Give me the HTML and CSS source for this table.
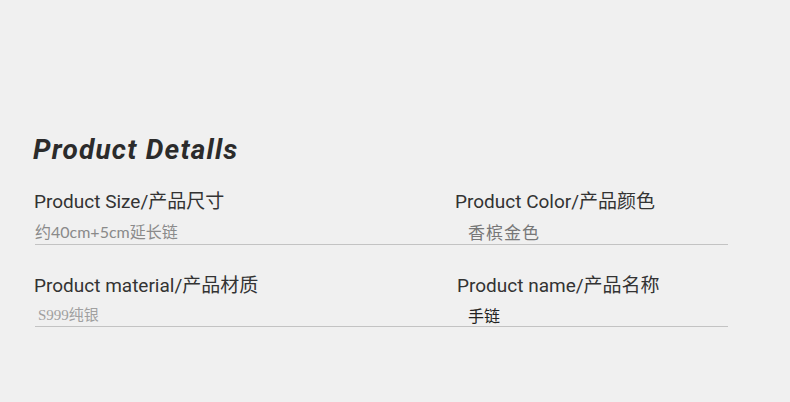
FILE: index.html
```html
<!DOCTYPE html>
<html lang="zh">
<head>
<meta charset="utf-8">
<title>Product Details</title>
<link rel="stylesheet" href="styles.css">
</head>
<body>
<main class="page">
  <h1 class="title">Product Detalls</h1>
  <section class="specs">
    <div class="row row-first">
      <div class="cell">
        <div class="label">Product Size/产品尺寸</div>
        <div class="value value-size">约40cm+5cm延长链</div>
      </div>
      <div class="cell cell-right">
        <div class="label">Product Color/产品颜色</div>
        <div class="value value-color">香槟金色</div>
      </div>
    </div>
    <div class="row row-second">
      <div class="cell">
        <div class="label">Product material/产品材质</div>
        <div class="value value-material">S999纯银</div>
      </div>
      <div class="cell cell-right">
        <div class="label label-name">Product name/产品名称</div>
        <div class="value value-name">手链</div>
      </div>
    </div>
  </section>
</main>
</body>
</html>
```
FILE: styles.css
```css
html, body {
  margin: 0;
  padding: 0;
  background: #f0f0f0;
}
.page {
  width: 790px;
  height: 402px;
  box-sizing: border-box;
  padding-top: 134px;
}
.title {
  margin: 0 0 0 33px;
  font-family: Roboto, "Liberation Sans", sans-serif;
  font-weight: 700;
  font-style: italic;
  font-size: 28px;
  line-height: 32px;
  letter-spacing: 1.2px;
  color: #2b2b2b;
}
.specs {
  margin-left: 35px;
  width: 693px;
}
.row {
  display: grid;
  grid-template-columns: 421px 272px;
  border-bottom: 1px solid #c3c3c3;
}
.row-first {
  padding-top: 25px;
  padding-bottom: 4px;
}
.row-second {
  padding-top: 30px;
  padding-bottom: 2px;
}
.cell {
  display: flex;
  flex-direction: column;
  gap: 10px;
}
.label {
  margin-left: -1px;
  font-family: Roboto, "Noto Sans CJK SC", sans-serif;
  font-size: 19px;
  line-height: 22px;
  color: #333;
  white-space: nowrap;
}
.label-name {
  margin-left: 1px;
}
.value {
  font-size: 15px;
  line-height: 17px;
  white-space: nowrap;
}
.cell-right .value {
  padding-left: 12px;
}
.value-size {
  font-family: Lato, "Noto Sans CJK SC", sans-serif;
  font-size: 16px;
  color: #8a8a8a;
}
.value-color {
  font-family: "Noto Sans CJK SC", sans-serif;
  font-size: 17px;
  color: #777;
  letter-spacing: 1px;
}
.value-material {
  font-family: "Liberation Serif", "Noto Sans CJK SC", serif;
  color: #a0a0a0;
  padding-left: 3px;
}
.value-name {
  font-family: "Noto Sans CJK SC", sans-serif;
  font-size: 16px;
  color: #222;
}
```
